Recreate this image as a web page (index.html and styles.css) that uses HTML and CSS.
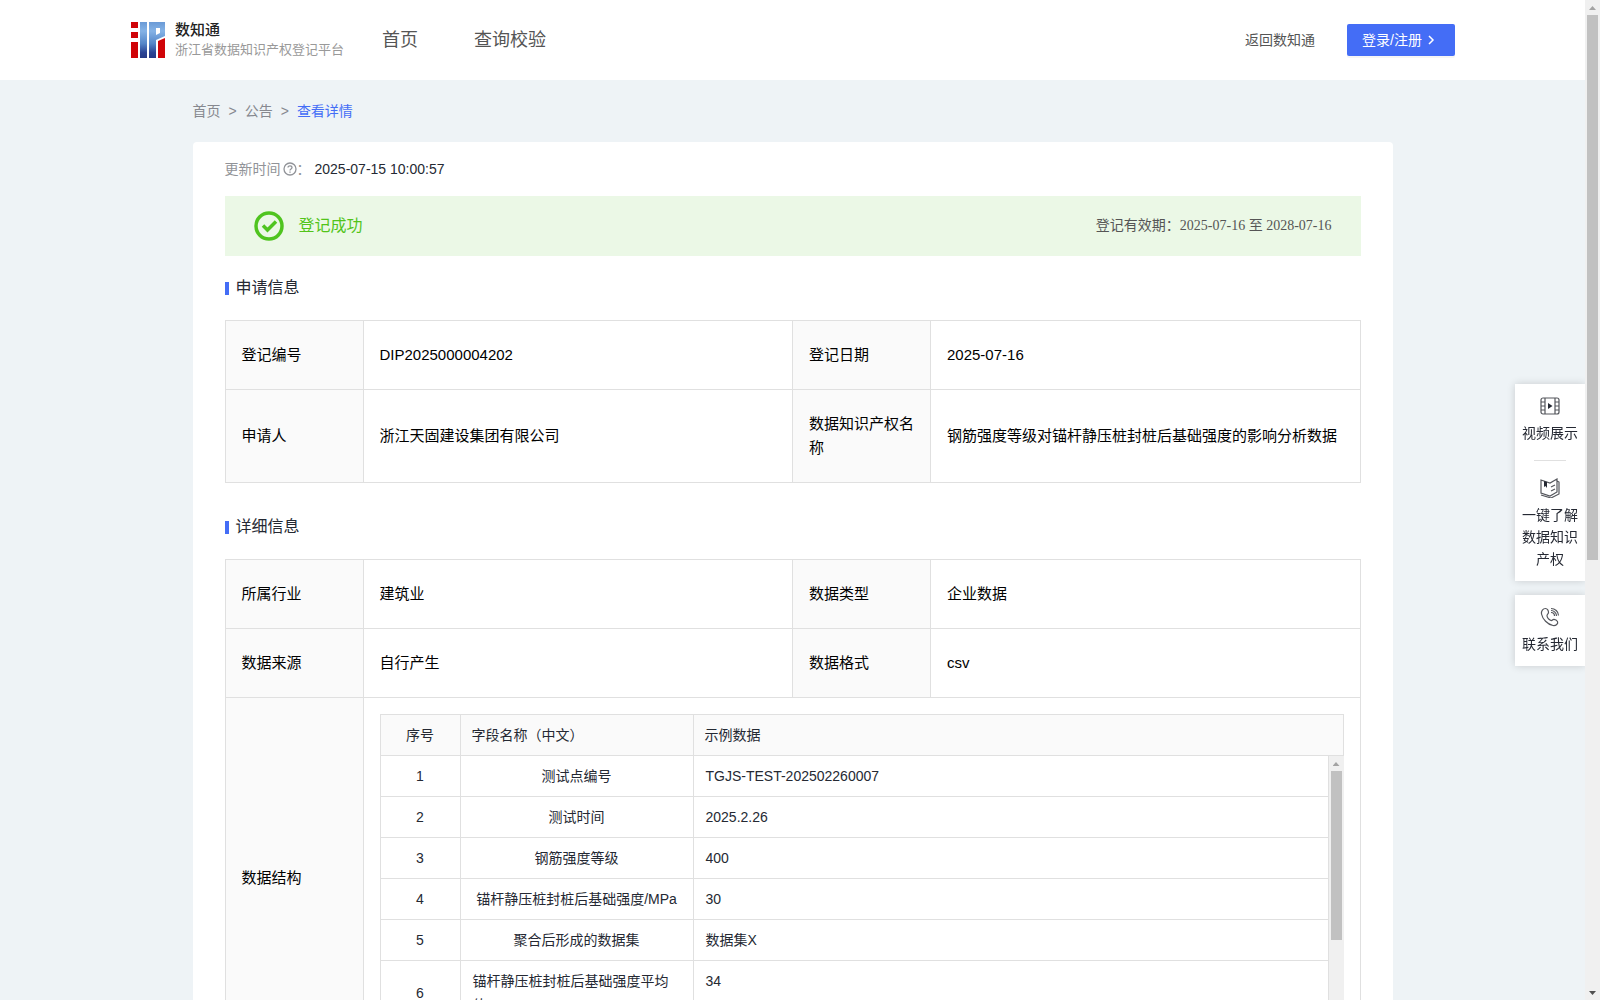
FILE: index.html
```html
<!DOCTYPE html>
<html lang="zh-CN">
<head>
<meta charset="utf-8">
<meta name="viewport" content="width=device-width, initial-scale=1">
<title>数知通 - 查看详情</title>
<link rel="stylesheet" href="styles.css">
</head>
<body>
<div class="window">
  <div class="page">
    <header class="header">
      <a class="brand" href="#">
        <svg class="brand-logo" viewBox="0 0 34 36" aria-hidden="true">
          <defs>
            <linearGradient id="blue" x1="0" y1="0" x2="0" y2="36" gradientUnits="userSpaceOnUse">
              <stop offset="0" stop-color="#6a9ad6"/>
              <stop offset=".25" stop-color="#85b3e6"/>
              <stop offset=".6" stop-color="#5586c8"/>
              <stop offset=".85" stop-color="#2b4494"/>
              <stop offset="1" stop-color="#263a86"/>
            </linearGradient>
          </defs>
          <path fill="#d00408" d="M0 0h7v6H0zM0 10h7v6H0zM0 20h7v16H0zM27 19l7-3v20h-7z"/>
          <path fill="url(#blue)" d="M9 0h7v36H9zM18 0h16v14l-9 4v18h-7zM25 6v7l4-2V6z" fill-rule="evenodd"/>
        </svg>
        <span class="brand-text">
          <strong class="brand-name">数知通</strong>
          <span class="brand-sub">浙江省数据知识产权登记平台</span>
        </span>
      </a>
      <nav class="nav">
        <a href="#">首页</a>
        <a href="#">查询校验</a>
      </nav>
      <a class="back" href="#">返回数知通</a>
      <button class="login" type="button">登录/注册
        <svg class="chevron" viewBox="0 0 8 12" aria-hidden="true"><path d="M2 2l4 4-4 4"/></svg>
      </button>
    </header>

    <main class="content">
      <nav class="crumbs" aria-label="面包屑">
        <a href="#">首页</a><span>&gt;</span><a href="#">公告</a><span>&gt;</span><a class="current" href="#">查看详情</a>
      </nav>

      <article class="card">
        <div class="updated">
          <span>更新时间</span>
          <svg class="help" viewBox="0 0 14 14" aria-hidden="true">
            <circle cx="7" cy="7" r="6"/>
            <path d="M5 5.600C5 3.200 9 3.200 9 5.600 9 7 7 7 7 8.500M7 9.500v1.200"/>
          </svg>
          <span class="colon">：</span>
          <time>2025-07-15 10:00:57</time>
        </div>

        <div class="status">
          <svg class="status-icon" viewBox="0 0 30 30" aria-hidden="true">
            <circle cx="15" cy="15" r="13"/>
            <path d="M9 14.500l4.500 4.500 8.500-8.500"/>
          </svg>
          <span class="status-text">登记成功</span>
          <span class="validity">登记有效期：2025-07-16 至 2028-07-16</span>
        </div>

        <h2 class="title">申请信息</h2>
        <table class="info">
          <colgroup><col class="label-col"><col><col class="label-col"><col></colgroup>
          <tbody>
            <tr><th scope="row">登记编号</th><td>DIP2025000004202</td><th scope="row">登记日期</th><td>2025-07-16</td></tr>
            <tr><th scope="row">申请人</th><td>浙江天固建设集团有限公司</td><th scope="row">数据知识产权名称</th><td>钢筋强度等级对锚杆静压桩封桩后基础强度的影响分析数据</td></tr>
          </tbody>
        </table>

        <h2 class="title title-next">详细信息</h2>
        <table class="info">
          <colgroup><col class="label-col"><col><col class="label-col"><col></colgroup>
          <tbody>
            <tr><th scope="row">所属行业</th><td>建筑业</td><th scope="row">数据类型</th><td>企业数据</td></tr>
            <tr><th scope="row">数据来源</th><td>自行产生</td><th scope="row">数据格式</th><td>csv</td></tr>
            <tr>
              <th scope="row">数据结构</th>
              <td class="nested" colspan="3">
                <div class="fields-head">
                  <span class="head-no">序号</span><span class="head-name">字段名称（中文）</span><span class="head-sample">示例数据</span>
                </div>
                <div class="fields-body">
                  <div class="fields-scroll">
                    <table class="fields" aria-label="数据结构">
                      <colgroup><col class="no-col"><col class="name-col"><col></colgroup>
                      <tbody>
                        <tr><td>1</td><td>测试点编号</td><td>TGJS-TEST-202502260007</td></tr>
                        <tr><td>2</td><td>测试时间</td><td>2025.2.26</td></tr>
                        <tr><td>3</td><td>钢筋强度等级</td><td>400</td></tr>
                        <tr><td>4</td><td>锚杆静压桩封桩后基础强度/MPa</td><td>30</td></tr>
                        <tr><td>5</td><td>聚合后形成的数据集</td><td>数据集X</td></tr>
                        <tr><td>6</td><td><span class="wrapped">锚杆静压桩封桩后基础强度平均值</span></td><td class="top">34</td></tr>
                      </tbody>
                    </table>
                  </div>
                  <div class="scrollbar" aria-hidden="true">
                    <span class="arrow arrow-up"></span><span class="thumb thumb-table"></span><span class="arrow arrow-down"></span>
                  </div>
                </div>
              </td>
            </tr>
          </tbody>
        </table>
      </article>
    </main>
  </div>

  <div class="scrollbar" aria-hidden="true">
    <span class="arrow arrow-up"></span><span class="thumb thumb-page"></span><span class="arrow arrow-down"></span>
  </div>

  <aside class="dock">
    <div class="dock-box">
      <a class="dock-item" href="#">
        <svg class="dock-icon" viewBox="0 0 20 20" aria-hidden="true">
          <rect x="1" y="2" width="18" height="16" rx="2"/>
          <path d="M5 2v16M15 2v16M1 6h4M1 10h4M1 14h4M15 6h4M15 10h4M15 14h4"/>
          <path class="solid" d="M8 7l4.500 3L8 13z"/>
        </svg>
        视频展示
      </a>
      <hr class="dock-line">
      <a class="dock-item" href="#">
        <svg class="dock-icon" viewBox="0 0 20 20" aria-hidden="true">
          <path d="M1 2l9 3 7-4v13l-7 4-9-3zM17 3l2 1v12l-8 4-10-3"/>
          <path d="M11 9l4-2M11 13l4-2"/>
          <path class="solid" d="M4 3l3 1v6L5.500 8 4 9z"/>
        </svg>
        一键了解数据知识产权
      </a>
    </div>
    <div class="dock-box">
      <a class="dock-item" href="#">
        <svg class="dock-icon" viewBox="0 0 20 20" aria-hidden="true">
          <path d="M5.500 1.500C3 1.500 1 4 1.500 7c1 5 6 10.500 11.500 11.500 3 .5 5.500-2 4.500-4-.8-1.200-2-2-3.500-2.200-1.500-.2-1.700 1.700-3 1.200C9 12.500 7 10 7 8.500c0-1.200 1.500-1.500 1.500-3S7.500 1.500 5.500 1.500z"/>
          <path d="M11 5.500c2 0 3.500 1.500 3.500 3.500M11 3.500c3 0 5.500 2.500 5.500 5.500M11 1.500c4 0 7.500 3 7.500 7"/>
        </svg>
        联系我们
      </a>
    </div>
  </aside>
</div>
</body>
</html>
```
FILE: styles.css
```css
* {
  box-sizing: border-box;
}

body {
  margin: 0;
  background: #eef3f6;
  color: #252933;
  font-family: "Liberation Sans", "Noto Sans CJK SC", sans-serif;
  font-size: 14px;
  line-height: 22px;
}

a {
  color: inherit;
  text-decoration: none;
}

.window {
  display: flex;
  height: 100vh;
}

.page {
  flex: 1;
  min-width: 0;
  overflow-y: auto;
  scrollbar-width: none;
}

/* Header */
.header {
  display: flex;
  align-items: center;
  height: 80px;
  padding: 0 130px;
  background: #fff;
}

.brand {
  display: flex;
  align-items: center;
  gap: 9px;
}

.brand-logo {
  width: 36px;
  height: 36px;
}

.brand-text {
  display: flex;
  flex-direction: column;
  width: 166px;
  line-height: 20px;
  white-space: nowrap;
}

.brand-name {
  color: #222;
  font-size: 15px;
  font-weight: 500;
}

.brand-sub {
  color: #999;
  font-size: 13px;
}

.nav {
  display: flex;
  gap: 56px;
  margin-left: 41px;
  color: #555;
  font-size: 18px;
}

.back {
  margin-left: auto;
  color: #555;
}

.login {
  display: flex;
  align-items: center;
  gap: 5px;
  width: 108px;
  height: 32px;
  margin-left: 32px;
  padding: 0 15px;
  border: 0;
  border-radius: 2px;
  background: #446df6;
  box-shadow: 0 2px 0 rgba(0, 0, 0, .04);
  color: #fff;
  font: inherit;
  white-space: nowrap;
}

.chevron {
  width: 8px;
  height: 12px;
  fill: none;
  stroke: #fff;
  stroke-width: 1.5;
}

/* Main column */
.content {
  max-width: 1200px;
  margin: 0 auto;
}

.crumbs {
  display: flex;
  gap: 8px;
  padding: 20px 0;
  color: #86888f;
}

.crumbs .current {
  color: #446df6;
}

.card {
  padding: 16px 32px 32px;
  border-radius: 4px;
  background: #fff;
}

.updated {
  display: flex;
  align-items: center;
  margin-bottom: 16px;
  color: #919398;
}

.updated time {
  margin-left: 4px;
  color: #252933;
}

.help {
  width: 14px;
  height: 14px;
  margin-left: 2px;
  fill: none;
  stroke: #919398;
  stroke-width: 1.3;
}

.status {
  display: flex;
  align-items: center;
  height: 60px;
  padding: 0 29px;
  background: #ebf8e6;
}

.status-icon {
  width: 30px;
  height: 30px;
  fill: none;
  stroke: #4fc41f;
  stroke-width: 3.5;
}

.status-text {
  margin-left: 15px;
  color: #52c41a;
  font-size: 16px;
}

.validity {
  margin-left: auto;
  color: #555;
  font-family: "Liberation Serif", "Noto Sans CJK SC", serif;
}

.title {
  display: flex;
  align-items: center;
  gap: 7px;
  margin: 20px 0;
  font-size: 16px;
  font-weight: 400;
  line-height: 24px;
}

.title::before {
  width: 4px;
  height: 13px;
  background: #446df6;
  content: "";
}

.title-next {
  margin-top: 32px;
}

/* Label and value tables */
.info {
  width: 100%;
  border-collapse: collapse;
  table-layout: fixed;
  color: #000;
  font-size: 15px;
  line-height: 24px;
}

.label-col {
  width: 138px;
}

.info > tbody > tr > th,
.info > tbody > tr > td {
  padding: 22px 16px;
  border: 1px solid #e0e0e0;
  font-weight: 400;
  text-align: left;
}

.info > tbody > tr > th {
  background: #fafafa;
}

.info > tbody > tr > .nested {
  padding: 16px;
}

/* Field list with its own scroll area */
.fields-head {
  display: grid;
  grid-template-columns: 79px 233px 1fr;
  border: 1px solid #e0e0e0;
  background: #fafafa;
  color: #252933;
  font-size: 14px;
}

.fields-head span {
  padding: 8px 12px;
}

.fields-head span + span {
  padding-left: 11px;
  border-left: 1px solid #e0e0e0;
}

.head-no {
  text-align: center;
}

.fields-body {
  display: flex;
  height: 286px;
}

.fields-scroll {
  flex: 1;
  min-width: 0;
  overflow-y: auto;
  border-left: 1px solid #e0e0e0;
  scrollbar-width: none;
}

.fields {
  width: 100%;
  border-collapse: separate;
  border-spacing: 0;
  table-layout: fixed;
  color: #252933;
  font-size: 14px;
}

.no-col {
  width: 80px;
}

.name-col {
  width: 233px;
}

.fields td {
  padding: 8px 12px;
  border-right: 1px solid #e0e0e0;
  border-bottom: 1px solid #e0e0e0;
  text-align: center;
}

.fields td:last-child {
  text-align: left;
}

.fields .top {
  vertical-align: top;
}

.wrapped {
  display: inline-block;
  text-align: left;
}

/* Scrollbars */
.scrollbar {
  display: flex;
  flex: none;
  flex-direction: column;
  align-items: center;
  width: 15px;
  background: #f0f0f0;
}

.arrow {
  width: 7px;
  height: 4px;
  margin: 6px 0 5px;
}

.arrow-up {
  background: #a3a3a3;
  clip-path: polygon(50% 0, 100% 100%, 0 100%);
}

.arrow-down {
  margin-top: auto;
  background: #505050;
  clip-path: polygon(0 0, 100% 0, 50% 100%);
}

.thumb {
  width: 11px;
  background: #c1c1c1;
}

.thumb-page {
  height: 54.5%;
}

.thumb-table {
  height: 59%;
}

/* Floating shortcuts, over the page's right edge */
.dock {
  position: fixed;
  top: 384px;
  right: 15px;
  display: grid;
  gap: 14px;
  width: 70px;
}

.dock-box {
  padding: 12px 7px 11px;
  background: #fff;
  box-shadow: 0 0 8px rgba(0, 0, 0, .16);
  clip-path: inset(-10px 0 -10px -10px);
}

.dock-item {
  display: grid;
  justify-items: center;
  gap: 6px;
  text-align: center;
}

.dock-icon {
  width: 20px;
  height: 20px;
  fill: none;
  stroke: #54565c;
  stroke-width: 1.2;
}

.dock-icon .solid {
  fill: #252933;
  stroke: none;
}

.dock-line {
  width: 32px;
  height: 1px;
  margin: 16px auto 17px;
  border: 0;
  background: #e0e0e0;
}
```
